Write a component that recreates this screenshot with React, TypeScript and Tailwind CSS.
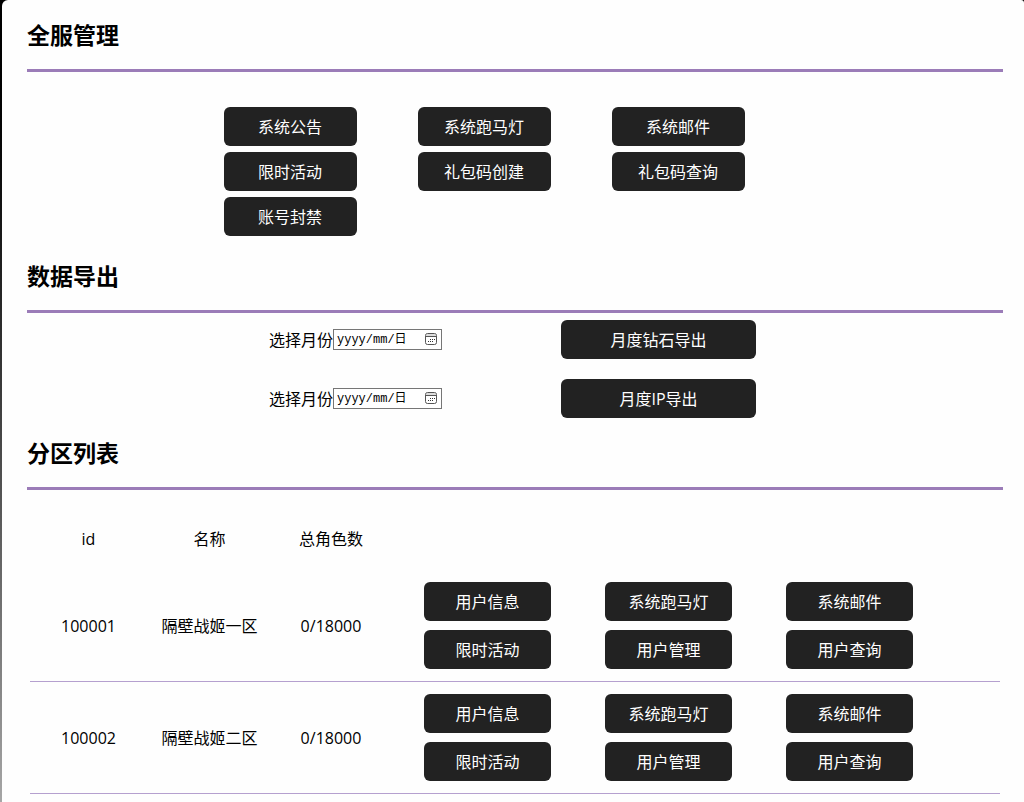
import type { ReactNode } from "react";

const globalActions = [
  "系统公告",
  "系统跑马灯",
  "系统邮件",
  "限时活动",
  "礼包码创建",
  "礼包码查询",
  "账号封禁",
];

const exportsList = [
  { id: "diamond-month", label: "月度钻石导出" },
  { id: "ip-month", label: "月度IP导出" },
];

const zoneActions = ["用户信息", "系统跑马灯", "系统邮件", "限时活动", "用户管理", "用户查询"];

const zones = [
  { id: "100001", name: "隔壁战姬一区", roles: "0/18000" },
  { id: "100002", name: "隔壁战姬二区", roles: "0/18000" },
];

function SectionTitle({ children }: { children: ReactNode }) {
  return (
    <h2 className="border-b-3 border-[#9b7cb8] pb-[18px] text-[23px] leading-8 font-bold">
      {children}
    </h2>
  );
}

function ActionButton({ children, width }: { children: ReactNode; width: string }) {
  return (
    <button
      type="button"
      className={`h-[39px] cursor-pointer rounded-md bg-[#222222] text-base text-white hover:bg-[#3a3a3a] ${width}`}
    >
      {children}
    </button>
  );
}

function CalendarIcon() {
  return (
    <svg width="13" height="13" viewBox="0 0 13 13" fill="none" aria-hidden="true">
      <rect x="0.5" y="0.5" width="11" height="11" rx="2" fill="#fff" stroke="#555" />
      <path d="M1 2h10" stroke="#bbb" />
      <path d="M1 3.5h10" stroke="#555" />
      <path d="M5 6.5h1M7 6.5h1M9 6.5h1M3 8.5h1M5 8.5h1M7 8.5h1" stroke="#333" />
    </svg>
  );
}

function MonthField({ id }: { id: string }) {
  return (
    <div className="flex items-center">
      <label htmlFor={id}>选择月份</label>
      <div className="flex h-[21px] w-[109px] items-center border border-[#767676] bg-white pr-[3px] pl-[3px]">
        <input
          id={id}
          type="text"
          placeholder="yyyy/mm/日"
          className="w-full min-w-0 font-['Liberation_Mono','Noto_Sans_CJK_SC',monospace] text-xs text-black outline-none placeholder:text-black"
        />
        <button type="button" aria-label="打开日历" className="shrink-0">
          <CalendarIcon />
        </button>
      </div>
    </div>
  );
}

export default function App() {
  return (
    <div className="min-h-screen bg-linear-to-b from-black to-[#a6a6a6] pl-0.5 font-['Open_Sans','Noto_Sans_CJK_SC',sans-serif] text-base text-black">
      <main className="min-h-screen rounded-tl-md rounded-tr-[3px] bg-[#fefefe] pt-[19px] pr-[21px] pb-2 pl-[25px]">
        <section>
          <SectionTitle>全服管理</SectionTitle>
          <div className="mt-[35px] mr-[228px] ml-[166px] grid grid-cols-3 justify-items-center gap-y-1.5">
            {globalActions.map((label) => (
              <ActionButton key={label} width="w-[133px]">
                {label}
              </ActionButton>
            ))}
          </div>
        </section>

        <section className="mt-6">
          <SectionTitle>数据导出</SectionTitle>
          <div className="mt-[7px] mr-[193px] ml-[177px] space-y-5">
            {exportsList.map((item) => (
              <form
                key={item.id}
                className="grid grid-cols-2 items-center justify-items-center"
                onSubmit={(e) => e.preventDefault()}
              >
                <MonthField id={item.id} />
                <ActionButton width="w-[195px]">{item.label}</ActionButton>
              </form>
            ))}
          </div>
        </section>

        <section className="mt-[19px]">
          <SectionTitle>分区列表</SectionTitle>
          <div className="mt-[18px] px-[3px]">
            <table className="w-full table-fixed border-collapse text-center">
              <thead>
                <tr className="h-[62px]">
                  <th className="w-[117px] font-normal">id</th>
                  <th className="w-[125px] font-normal">名称</th>
                  <th className="w-[118px] font-normal">总角色数</th>
                  <th />
                </tr>
              </thead>
              <tbody>
                {zones.map((zone) => (
                  <tr key={zone.id} className="border-b border-[#b5a0cf]">
                    <td>{zone.id}</td>
                    <td>{zone.name}</td>
                    <td>{zone.roles}</td>
                    <td className="py-3 pr-[60px] pl-[7px]">
                      <div className="grid grid-cols-3 justify-items-center gap-y-[9px]">
                        {zoneActions.map((label) => (
                          <ActionButton key={label} width="w-[127px]">
                            {label}
                          </ActionButton>
                        ))}
                      </div>
                    </td>
                  </tr>
                ))}
              </tbody>
            </table>
          </div>
        </section>
      </main>
    </div>
  );
}
